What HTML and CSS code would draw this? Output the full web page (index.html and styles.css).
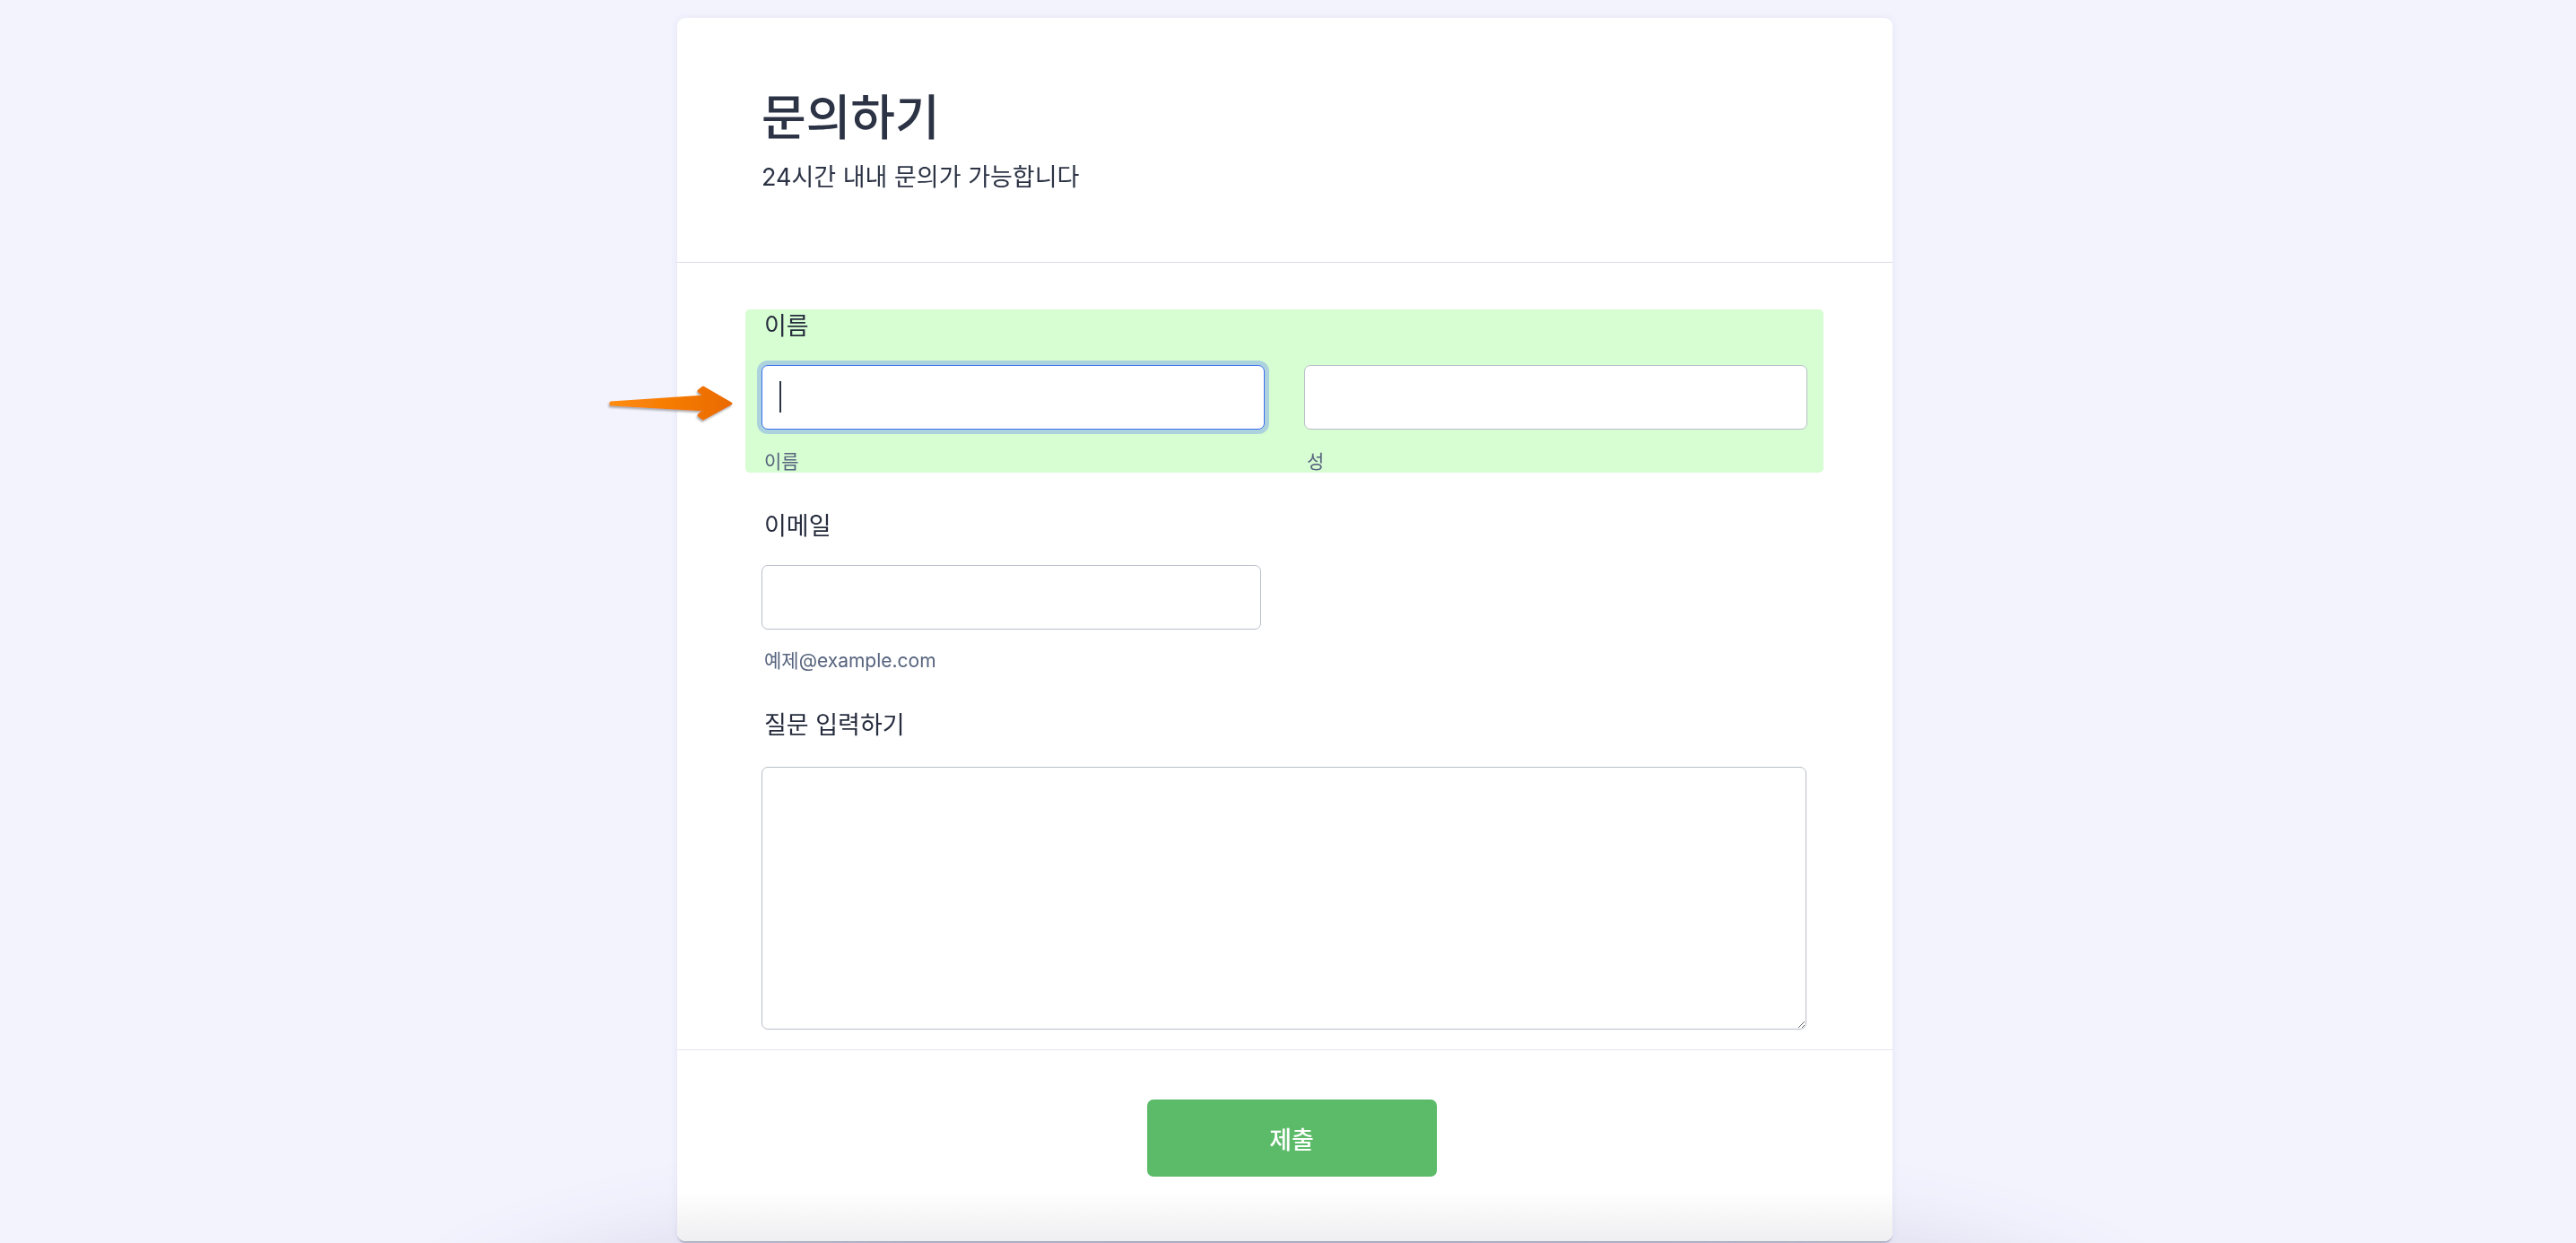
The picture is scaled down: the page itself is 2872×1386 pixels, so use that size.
FILE: index.html
```html
<!DOCTYPE html>
<html lang="ko">
<head>
<meta charset="utf-8">
<title>문의하기</title>
<link rel="stylesheet" href="styles.css">
</head>
<body>
<svg class="pointer-arrow" width="150" height="50" viewBox="0 0 150 50" aria-hidden="true">
  <defs>
    <linearGradient id="arrowFill" x1="0" y1="0" x2="1" y2="0">
      <stop offset="0" stop-color="#ff8c0a"/>
      <stop offset="1" stop-color="#ea6a00"/>
    </linearGradient>
    <filter id="arrowShadow" x="-10%" y="-30%" width="120%" height="160%">
      <feDropShadow dx="-1" dy="2" stdDeviation="1.2" flood-color="#6a6a6a" flood-opacity="0.55"/>
    </filter>
  </defs>
  <path d="M5 23 L110 16 L103 10 L108 6 L139 24 L108 41 L103 37 L110 31 L5 25 Z" fill="url(#arrowFill)" stroke="url(#arrowFill)" stroke-width="3" stroke-linejoin="round" filter="url(#arrowShadow)"/>
</svg>

<main class="card">
  <header class="card-header">
    <h1 class="title">문의하기</h1>
    <p class="subtitle">24시간 내내 문의가 가능합니다</p>
  </header>

  <ul class="fields">
    <li class="field field-active">
      <label class="field-label">이름</label>
      <div class="name-row">
        <div class="name-col">
          <div class="input-wrap">
            <input class="text-input is-focused" type="text">
            <span class="caret"></span>
          </div>
          <span class="sublabel sublabel-name">이름</span>
        </div>
        <div class="name-col">
          <div class="input-wrap">
            <input class="text-input" type="text">
          </div>
          <span class="sublabel sublabel-name">성</span>
        </div>
      </div>
    </li>

    <li class="field">
      <label class="field-label">이메일</label>
      <input class="text-input email-input" type="email">
      <span class="sublabel sublabel-email">예제@example.com</span>
    </li>

    <li class="field">
      <label class="field-label">질문 입력하기</label>
      <textarea class="question-input"></textarea>
    </li>
  </ul>

  <footer class="card-footer">
    <button class="submit" type="button">제출</button>
  </footer>
</main>
</body>
</html>
```

FILE: styles.css
```css
html,
body {
  margin: 0;
  height: 100%;
  overflow: hidden;
}

body {
  box-sizing: border-box;
  padding: 20px 7px 0 0;
  display: flex;
  justify-content: center;
  align-items: flex-start;
  background: #f3f3fe;
  color: #2c3345;
  font-family: Inter, "Noto Sans CJK KR", "Noto Sans", sans-serif;
}

body::after {
  content: "";
  position: fixed;
  left: 560px;
  width: 1750px;
  top: 1405px;
  height: 200px;
  border-radius: 50%;
  box-shadow: 0 0 100px 60px rgba(80, 80, 130, 0.2);
  z-index: 0;
}

.pointer-arrow {
  position: absolute;
  left: 676px;
  top: 426px;
  z-index: 3;
}

.card {
  position: relative;
  z-index: 1;
  width: 1355px;
  background: #fff;
  border-radius: 9px;
  box-shadow: 0 3px 2px -1px rgba(70, 72, 110, 0.35), 0 0 8px rgba(90, 90, 170, 0.08);
  overflow: hidden;
}

.card-header {
  padding: 79px 94px 76px;
  border-bottom: 1px solid #dcdce4;
}

.title {
  margin: 0;
  font-size: 54px;
  line-height: 65px;
  font-weight: 500;
}

.subtitle {
  margin: 16px 0 0;
  font-size: 27px;
  line-height: 36px;
  font-weight: 400;
}

.fields {
  list-style: none;
  margin: 0;
  padding: 52px 77px 22px 76px;
  display: flex;
  flex-direction: column;
  gap: 41px;
}

.field {
  padding: 3px 18px 0;
  border-radius: 5px;
}

.field-active {
  background: #d7fdd3;
}

.field-label {
  display: block;
  padding-left: 3px;
  font-size: 27px;
  line-height: 32px;
  font-weight: 400;
  color: #262c3d;
  margin-bottom: 27px;
}

.name-row {
  display: grid;
  grid-template-columns: 1fr 1fr;
  column-gap: 44px;
}

.input-wrap {
  position: relative;
}

.text-input {
  display: block;
  box-sizing: border-box;
  width: 100%;
  height: 72px;
  margin: 0;
  padding: 0 18px;
  border: 1px solid #b8bdc9;
  border-radius: 7px;
  background: #fff;
  font: inherit;
  font-size: 25px;
  color: #2c3345;
  outline: none;
}

.text-input.is-focused {
  border-color: #3a6ff0;
  box-shadow: 0 0 0 5px #acd3dd;
}

.caret {
  position: absolute;
  left: 20px;
  top: 18px;
  width: 2px;
  height: 35px;
  background: #2c3345;
}

.email-input {
  width: 557px;
}

.sublabel {
  display: block;
  padding-left: 3px;
  font-size: 21px;
  line-height: 24px;
  color: #57647e;
}

.sublabel-name {
  margin-top: 24px;
}

.sublabel-email {
  margin-top: 23px;
}

.question-input {
  display: block;
  box-sizing: border-box;
  width: 1165px;
  height: 293px;
  margin: 30px 0 0;
  padding: 12px 18px;
  border: 1px solid #b8bdc9;
  border-radius: 7px;
  background: #fff;
  font: inherit;
  font-size: 25px;
  outline: none;
}

.card-footer {
  display: flex;
  justify-content: center;
  padding: 55px 0 72px 15px;
  border-top: 1px solid #e6e6ef;
  background: linear-gradient(to bottom, #fff 0, #fff calc(100% - 56px), #efeff1 100%);
}

.submit {
  width: 323px;
  height: 86px;
  border: none;
  border-radius: 7px;
  background: #5bbb68;
  color: #fff;
  font-family: inherit;
  font-size: 27px;
  font-weight: 500;
  cursor: pointer;
}
```
